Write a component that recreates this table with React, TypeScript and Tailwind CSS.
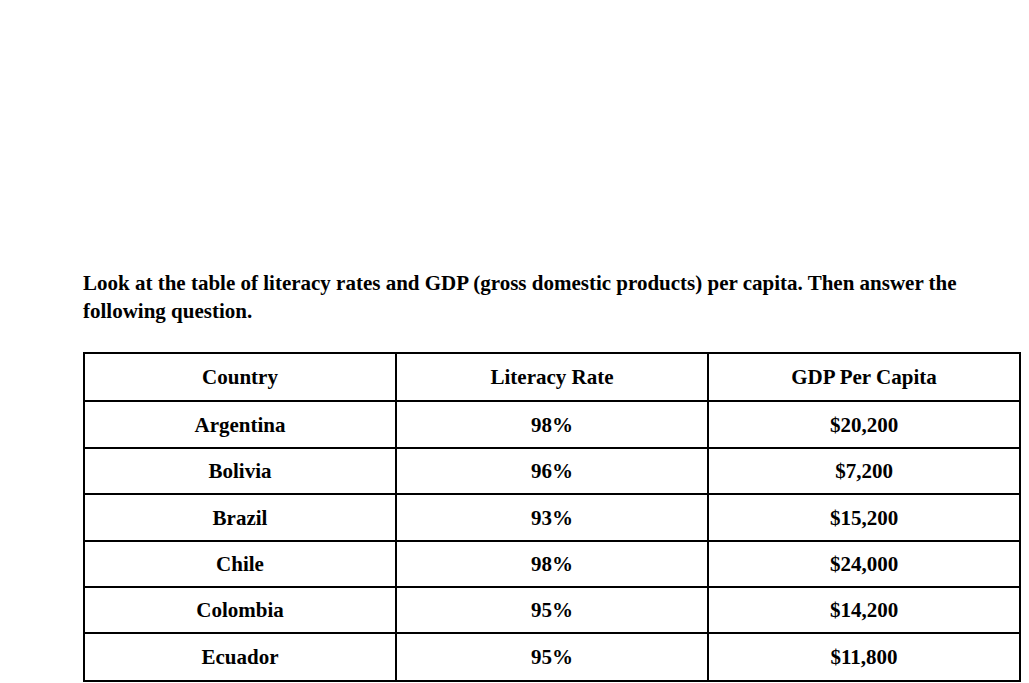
import React from "react";

const rows = [
  ["Argentina", "98%", "$20,200"],
  ["Bolivia", "96%", "$7,200"],
  ["Brazil", "93%", "$15,200"],
  ["Chile", "98%", "$24,000"],
  ["Colombia", "95%", "$14,200"],
  ["Ecuador", "95%", "$11,800"],
];

const heights = [47, 46, 47, 46, 46, 48];

export default function App() {
  return (
    <div className="w-[1029px] h-[683px] overflow-hidden bg-white text-black [font-family:'Liberation_Serif','Times_New_Roman',serif]">
      <div className="pl-[83px] pt-[269px]">
        <p className="text-[21px] leading-[28px] font-bold w-[938px]">
          Look at the table of literacy rates and GDP (gross domestic products) per capita. Then answer the following question.
        </p>
        <table className="mt-[27px] w-[938px] border-collapse border-2 border-black table-fixed text-[21px] font-bold">
          <thead>
            <tr className="h-[48px]">
              <th className="border-2 border-black text-center font-bold pt-[2px]">Country</th>
              <th className="border-2 border-black text-center font-bold pt-[2px]">Literacy Rate</th>
              <th className="border-2 border-black text-center font-bold pt-[2px]">GDP Per Capita</th>
            </tr>
          </thead>
          <tbody>
            {rows.map((r, i) => (
              <tr key={r[0]} style={{ height: heights[i] }}>
                {r.map((c, j) => (
                  <td key={j} className="border-2 border-black text-center pt-[2px]">
                    {c}
                  </td>
                ))}
              </tr>
            ))}
          </tbody>
        </table>
      </div>
    </div>
  );
}
